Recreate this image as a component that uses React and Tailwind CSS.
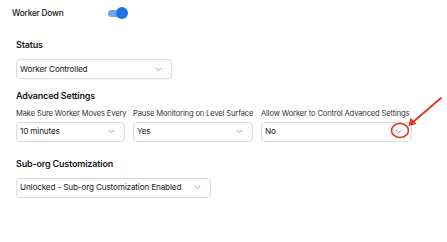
import React from 'react';

const Chevron = () => (
  <svg width="7" height="5" viewBox="0 0 7 5" className="shrink-0">
    <path d="M1 1.2 L3.5 3.6 L6 1.2" fill="none" stroke="#8a8f98" strokeWidth="0.9" strokeLinecap="round" strokeLinejoin="round" />
  </svg>
);

const Select = ({ value, width }) => (
  <div className={`${width} h-[20px] flex items-center justify-between pl-[3px] pr-[9px] border border-[#d9dce1] rounded-[4px] bg-white`}>
    <span className="text-[8.2px] tracking-[-0.02em] text-[#1a1a1a] leading-none whitespace-nowrap">{value}</span>
    <Chevron />
  </div>
);

const Field = ({ label, value, width }) => (
  <div className={`${width} flex flex-col gap-[4px]`}>
    <span className="text-[7.6px] tracking-[-0.02em] text-[#33363b] leading-none whitespace-nowrap">{label}</span>
    <Select value={value} width="w-full" />
  </div>
);

export default function App() {
  return (
    <div className="relative w-[447px] h-[242px] bg-white overflow-hidden font-['Inter',sans-serif] text-[#16181b]">
      {/* Worker Down toggle */}
      <div className="flex items-center pl-[12px] pt-[7px] h-[12px] box-content">
        <span className="w-[96px] text-[8.4px] tracking-[-0.03em] font-medium leading-none">Worker Down</span>
        <div className="relative w-[20px] h-[12px] flex items-center">
          <div className="w-[17px] h-[7px] rounded-full bg-[#6ea6ee]" />
          <div className="absolute left-[8px] top-0 w-[12px] h-[12px] rounded-full bg-[#1a73e8]" />
        </div>
      </div>

      <div className="flex flex-col pl-[16px]">
        {/* Status */}
        <h2 className="mt-[21px] text-[9px] tracking-[-0.02em] font-semibold leading-none">Status</h2>
        <div className="mt-[10px]">
          <Select value="Worker Controlled" width="w-[156px]" />
        </div>

        {/* Advanced Settings */}
        <h2 className="mt-[12px] text-[9px] tracking-[-0.02em] font-semibold leading-none">Advanced Settings</h2>
        <div className="mt-[10px] flex gap-[8px]">
          <Field label="Make Sure Worker Moves Every" value="10 minutes" width="w-[109px]" />
          <Field label="Pause Monitoring on Level Surface" value="Yes" width="w-[120px]" />
          <Field label="Allow Worker to Control Advanced Settings" value="No" width="w-[151px]" />
        </div>

        {/* Sub-org Customization */}
        <h2 className="mt-[17px] text-[9px] tracking-[-0.02em] font-semibold leading-none">Sub-org Customization</h2>
        <div className="mt-[10px]">
          <Select value="Unlocked - Sub-org Customization Enabled" width="w-[195px]" />
        </div>
      </div>

      {/* red annotation */}
      <svg className="absolute left-0 top-0 pointer-events-none" width="447" height="242">
        <ellipse cx="400" cy="130.5" rx="8.5" ry="7" fill="none" stroke="#e8361f" strokeWidth="1.6" />
        <line x1="441" y1="98" x2="412" y2="123" stroke="#e8361f" strokeWidth="1.8" strokeLinecap="round" />
        <path d="M408.5 126 L410.5 117.5 L416.5 124 Z" fill="#e8361f" />
      </svg>
    </div>
  );
}
